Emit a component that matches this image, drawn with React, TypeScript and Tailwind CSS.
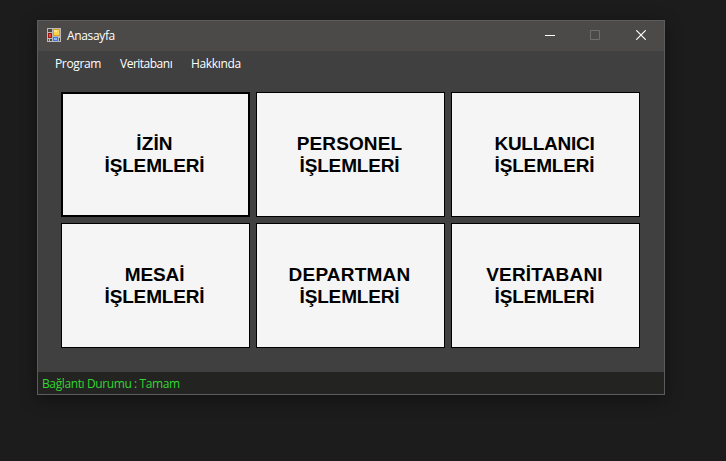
const tiles = [
  { name: 'İZİN', tracking: 'tracking-[0.1px]' },
  { name: 'PERSONEL', tracking: 'tracking-[0.1px]' },
  { name: 'KULLANICI', tracking: 'tracking-[-0.25px]' },
  { name: 'MESAİ', tracking: 'tracking-[-0.1px]' },
  { name: 'DEPARTMAN', tracking: 'tracking-[0.2px]' },
  { name: 'VERİTABANI', tracking: 'tracking-[0.2px]' },
];

function FormIcon() {
  return (
    <svg width="14" height="14" viewBox="0 0 14 14" shapeRendering="crispEdges">
      <rect width="14" height="14" fill="#b9b9b9" />
      <path d="M1 1h4v3H1zM1 11h1v2H1zM3 11h2v2H3zM12 10h1v3h-1z" fill="#4a4946" />
      <rect x="6" y="1" width="7" height="7" fill="#d9a01c" />
      <rect x="7" y="2" width="5" height="5" fill="#fbd34d" />
      <rect x="7" y="2" width="3" height="2" fill="#fde48a" />
      <rect x="1" y="5" width="4" height="5" fill="#a8160f" />
      <rect x="2" y="6" width="2" height="3" fill="#dc4a3e" />
      <rect x="6" y="9" width="5" height="4" fill="#3f74dc" />
      <rect x="7" y="10" width="3" height="2" fill="#8db9fa" />
    </svg>
  );
}

export default function App() {
  return (
    <div className="h-[461px] w-[726px] overflow-hidden bg-[#1c1c1c] pl-[37px] pt-5 font-['Open_Sans','Noto_Sans',sans-serif] text-[12px] text-white">
      <div className="flex h-[375px] w-[628px] flex-col border border-[#5c5c5c] bg-[#404040] shadow-[0_4px_16px_rgba(0,0,0,0.4)]">
        <header className="flex h-[30px] shrink-0 items-center bg-[#4c4a48] pl-[9px]">
          <div className="pb-[2px]">
            <FormIcon />
          </div>
          <span className="ml-[6px] flex-1 tracking-[-0.35px]">Anasayfa</span>
          <button className="flex h-[30px] w-[45px] items-center justify-center pb-[2px]" aria-label="Simge durumuna küçült">
            <svg width="10" height="10" shapeRendering="crispEdges"><path d="M0 5h10v1H0z" fill="#fff" /></svg>
          </button>
          <button className="mr-px flex h-[30px] w-[45px] items-center justify-center pb-[2px]" aria-label="Ekranı kapla">
            <svg width="10" height="10"><path d="M.5.5h9v9h-9z" fill="none" stroke="#706e6c" /></svg>
          </button>
          <button className="flex h-[30px] w-[46px] items-center justify-center pb-[2px]" aria-label="Kapat">
            <svg width="10" height="10"><path d="M.3.3l9.4 9.4M9.7.3L.3 9.7" stroke="#fff" strokeWidth="1.2" /></svg>
          </button>
        </header>
        <nav className="flex h-6 shrink-0 items-center pl-[17px] pt-[2px]">
          <span className="w-[65px] tracking-[-0.36px]">Program</span>
          <span className="w-[71px] tracking-[-0.5px]">Veritabanı</span>
          <span className="tracking-[-0.33px]">Hakkında</span>
        </nav>
        <main className="grid flex-1 grid-cols-[189px_189px_189px] grid-rows-[125px_125px] gap-[6px] pl-[23px] pt-[17px]">
          {tiles.map(({ name, tracking }, i) => (
            <button
              key={name}
              className={`flex flex-col items-center justify-center border-black bg-[#f5f5f5] pr-[2px] font-['Liberation_Sans',Arial,sans-serif] text-[19px] font-bold leading-[22px] text-black ${i === 0 ? 'border-2' : 'border'}`}
            >
              <span className={tracking}>{name}</span>
              <span className="tracking-[-0.15px]">İŞLEMLERİ</span>
            </button>
          ))}
        </main>
        <footer className="flex h-[22px] shrink-0 items-center bg-[#232321] pl-1 pt-[2px] text-[#32d732]">
          <span className="tracking-[-0.39px]">Bağlantı Durumu : Tamam</span>
        </footer>
      </div>
    </div>
  );
}
